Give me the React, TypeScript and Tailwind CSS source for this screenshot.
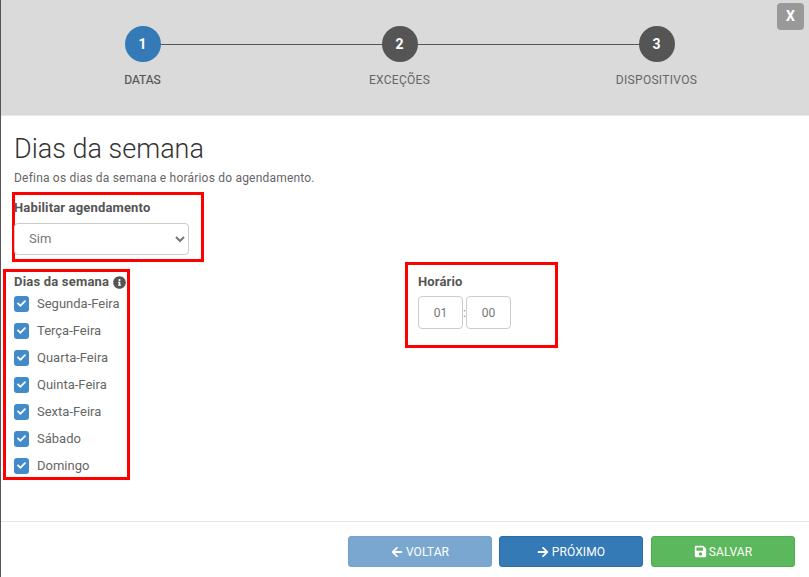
import React from 'react';
import { FaArrowLeft, FaArrowRight, FaSave, FaInfoCircle, FaCheck } from 'react-icons/fa';

const DAYS = ['Segunda-Feira', 'Terça-Feira', 'Quarta-Feira', 'Quinta-Feira', 'Sexta-Feira', 'Sábado', 'Domingo'];

const STEPS = [
  { n: 1, label: 'DATAS', circle: 'bg-[#337ab7]' },
  { n: 2, label: 'EXCEÇÕES', circle: 'bg-[#555555]' },
  { n: 3, label: 'DISPOSITIVOS', circle: 'bg-[#555555]' },
];

const App: React.FC = () => {
  return (
    <div className="w-[809px] h-[577px] overflow-hidden flex flex-col bg-white border-l border-l-[#555] font-['Roboto',sans-serif] text-[#555]">
      {/* Stepper */}
      <div className="relative h-[116px] shrink-0 bg-[#dadada] border-b border-b-[#e8e8e8] pt-[26px] pl-[13px]">
        <button className="absolute top-[3px] right-[5px] w-[27px] h-[27px] rounded-[4px] bg-[#999999] text-white text-[14px] font-bold flex items-center justify-center">
          X
        </button>
        <div className="flex">
          {STEPS.map((s, i) => (
            <div key={s.n} className="relative w-[257px] shrink-0 flex flex-col items-center">
              {i < 2 && <div className="absolute top-[17.5px] left-[128px] w-[257px] h-px bg-[#555]" />}
              <div className={`relative w-9 h-9 rounded-full flex items-center justify-center text-white text-[14px] font-bold ${s.circle}`}>
                {s.n}
              </div>
              <div className={`mt-[10px] text-[12px] leading-[17px] ${i === 0 ? 'text-[#555] [-webkit-text-stroke:0.2px_#555]' : 'text-[#666] tracking-[0.3px]'}`}>{s.label}</div>
            </div>
          ))}
        </div>
      </div>

      {/* Body */}
      <div className="flex-1 pl-[2px]">
        <div className="pl-[11px] pt-[17px]">
          <h1 className="text-[27px] leading-[32px] font-light text-[#333]">Dias da semana</h1>
          <p className="mt-[5px] text-[12px] leading-[17px] text-[#666] tracking-[0.2px]">Defina os dias da semana e horários do agendamento.</p>
        </div>
        <div className="flex items-start">
          <div className="w-[400px] shrink-0">
            <div className="ml-[9px] mt-[5px] w-[192px] h-[70px] border-[3px] border-[#f00]">
              <label className="block mt-[4px] ml-[-1px] text-[13px] leading-[18px] font-bold text-[#555] tracking-[0.15px]">Habilitar agendamento</label>
              <select className="block mt-[6px] ml-[-1px] w-[175px] h-[32px] pl-[10px] pr-[10px] pb-[2px] text-[13px] text-[#777] bg-white border border-[#ccc] rounded-[4px]" defaultValue="Sim">
                <option>Sim</option>
                <option>Não</option>
              </select>
            </div>
            <div className="mt-[7px] w-[127px] h-[211px] border-[3px] border-[#f00] pl-[8px]">
              <div className="flex items-center gap-[4px] mt-[1px] text-[13px] leading-[18px] font-bold text-[#555] tracking-[0.2px]">
                Dias da semana
                <FaInfoCircle className="w-[13px] h-[13px] text-[#555]" />
              </div>
              <ul className="mt-[-1px]">
                {DAYS.map((d) => (
                  <li key={d} className="h-[27px] flex items-center gap-[8px]">
                    <span className="w-[15px] h-[16px] flex items-center justify-center rounded-[3px] bg-[#428bca]">
                      <FaCheck className="w-[9px] h-[9px] text-white" />
                    </span>
                    <span className="text-[13px] text-[#666]">{d}</span>
                  </li>
                ))}
              </ul>
            </div>
          </div>
          <div className="w-[153px] h-[86px] ml-[2px] mt-[75px] border-[3px] border-[#f00] pl-[10px]">
            <label className="block mt-[8px] text-[13px] leading-[18px] font-bold text-[#555] tracking-[0.15px]">Horário</label>
            <div className="flex items-center mt-[5px]">
              <input readOnly value="01" className="w-[45px] h-[33px] text-center text-[12px] text-[#777] border border-[#ccc] rounded-[4px] outline-none" />
              <span className="w-[3px] text-[12px] text-center text-[#888]">:</span>
              <input readOnly value="00" className="w-[45px] h-[33px] text-center text-[12px] text-[#777] border border-[#ccc] rounded-[4px] outline-none" />
            </div>
          </div>
        </div>
      </div>

      {/* Footer */}
      <div className="h-[56px] shrink-0 border-t border-t-[#e5e5e5] flex justify-end gap-[7px] pt-[14px] pr-[14px]">
        <button className="w-[144px] h-[31px] rounded-[3px] bg-[#7aa7d0] border border-[#75a3cc] text-white text-[12px] tracking-[0.1px] flex items-center justify-center gap-[3px]">
          <FaArrowLeft className="w-[12px] h-[12px]" /> VOLTAR
        </button>
        <button className="w-[144px] h-[31px] rounded-[3px] bg-[#337ab7] border border-[#2e6da4] text-white text-[12px] tracking-[0.1px] flex items-center justify-center gap-[3px]">
          <FaArrowRight className="w-[12px] h-[12px]" /> PRÓXIMO
        </button>
        <button className="w-[144px] h-[31px] ml-px rounded-[3px] bg-[#5cb85c] border border-[#4cae4c] text-white text-[12px] tracking-[0.1px] flex items-center justify-center gap-[2px]">
          <FaSave className="w-[13px] h-[13px]" /> SALVAR
        </button>
      </div>
    </div>
  );
};

export default App;
